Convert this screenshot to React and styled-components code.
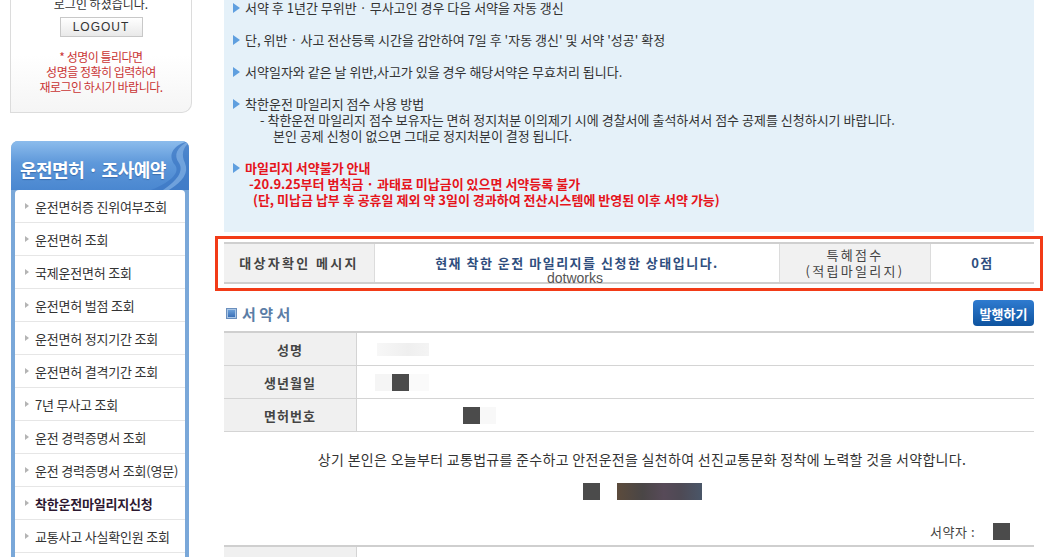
import React from 'react';
import styled, { createGlobalStyle } from 'styled-components';

const GlobalStyle = createGlobalStyle`
  html, body {
    margin: 0;
    padding: 0;
    background: #fff;
    overflow: hidden;
  }
  body {
    font-family: "Noto Sans CJK KR", "Noto Sans", sans-serif;
    font-size: 12px;
    color: #444;
  }
`;

const Page = styled.div`
  display: flex;
  align-items: flex-start;
  gap: 32px;
  width: 1045px;
  margin-top: -30px;
  padding-left: 10px;
  box-sizing: border-box;
`;

const Sidebar = styled.aside`
  width: 182px;
  flex: none;
`;

const LoginBox = styled.div`
  border: 1px solid #dcdcdc;
  border-top: 0;
  border-radius: 0 0 10px 0;
  background: linear-gradient(#fff 60%, #f5f5f5);
  text-align: center;
  padding: 10px 0 18px;
  line-height: 16px;
  color: #333;
`;

const LogoutButton = styled.button`
  display: block;
  margin: 5px auto 0;
  width: 83px;
  height: 20px;
  border: 1px solid #c8c8c8;
  background: linear-gradient(#fff, #e9e9e9);
  font-family: "Liberation Sans", Arial, sans-serif;
  font-size: 12px;
  letter-spacing: 1px;
  color: #333;
  padding: 0;
`;

const LoginWarn = styled.p`
  margin: 12px 0 0;
  color: #c93535;
  line-height: 15px;
  letter-spacing: -0.5px;
`;

const MenuPanel = styled.nav`
  margin-top: 28px;
  margin-left: 1px;
  width: 178px;
  background: linear-gradient(90deg, #7aa8d9, #6a9cd3 50%, #7aa8d9);
  border-radius: 7px 7px 0 0;
  padding: 0 4px;
  box-sizing: border-box;
`;

const MenuHeader = styled.div`
  position: relative;
  height: 49px;
  margin: 0 -4px;
  border-radius: 7px 7px 0 0;
  background: linear-gradient(#8cbcec, #5e98da 45%, #4a87d0);
  display: flex;
  align-items: center;
  padding: 6px 0 0 9px;
  box-sizing: border-box;
  overflow: hidden;
  svg {
    position: absolute;
    right: 0;
    top: 0;
  }
`;

const MenuTitle = styled.span`
  position: relative;
  z-index: 1;
  color: #fff;
  font-size: 18px;
  font-weight: bold;
  letter-spacing: -0.5px;
  text-shadow: 0 1px 1px rgba(20, 60, 120, 0.4);
`;

const MenuList = styled.ul`
  list-style: none;
  margin: 0;
  padding: 0;
  background: #fff;
  border-radius: 4px 4px 0 0;
`;

const MenuItem = styled.li`
  height: 32px;
  border-bottom: 1px solid #e6e6e6;
  display: flex;
  align-items: center;
  gap: 6px;
  padding-left: 10px;
  font-size: 13px;
  letter-spacing: -0.2px;
  color: ${(p) => (p.$active ? '#2c1830' : '#333')};
  font-weight: ${(p) => (p.$active ? 'bold' : 'normal')};
  &::before {
    content: '';
    border-left: 4px solid #b4b4b4;
    border-top: 3px solid transparent;
    border-bottom: 3px solid transparent;
  }
`;

const Main = styled.main`
  width: 810px;
  flex: none;
`;

const Notice = styled.div`
  background: #e5f1f9;
  padding: 30px 0 24px 9px;
`;

const NoticeItem = styled.div`
  display: flex;
  font-size: 13px;
  line-height: 16px;
  margin-bottom: 16px;
  color: ${(p) => (p.$red ? '#e5141c' : '#333')};
  font-weight: ${(p) => (p.$red ? 'bold' : 'normal')};
  &:last-child {
    margin-bottom: 0;
  }
  &::before {
    content: '';
    flex: none;
    margin: 3px 5px 0 0;
    height: 0;
    border-left: 7px solid #5f9fdf;
    border-top: 5px solid transparent;
    border-bottom: 5px solid transparent;
  }
`;

const SubLine = styled.div`
  padding-left: ${(p) => p.$indent}px;
`;

const Highlight = styled.div`
  position: relative;
  margin: 4px -9px 0;
  border: 3px solid #f23b17;
  padding: 3px 6px 4px;
`;

const Watermark = styled.span`
  position: absolute;
  left: 329px;
  top: 32px;
  font-family: "Liberation Sans", Arial, sans-serif;
  font-size: 14px;
  line-height: 15px;
  color: #555;
`;

const InfoTable = styled.div`
  display: grid;
  grid-template-columns: 150px 405px 151px 1fr;
  border-top: 2px solid #cfcfcf;
  border-bottom: 2px solid #cfcfcf;
`;

const InfoCell = styled.div`
  height: 38px;
  display: flex;
  align-items: center;
  justify-content: center;
  text-align: center;
  line-height: 16px;
  font-size: 13px;
  letter-spacing: ${(p) => (p.$label ? '2.3px' : '1.5px')};
  background: ${(p) => (p.$label ? '#f1f1f1' : '#fff')};
  color: ${(p) => (p.$label ? '#444' : '#2f4e7e')};
  font-weight: ${(p) => (p.$light ? 'normal' : 'bold')};
  & + & {
    border-left: 1px solid #dcdcdc;
  }
`;

const SectionHead = styled.div`
  display: flex;
  justify-content: space-between;
  align-items: center;
  height: 26px;
  margin-top: 9px;
`;

const SectionTitle = styled.h3`
  margin: 0;
  padding-left: 3px;
  display: flex;
  align-items: center;
  gap: 6px;
  font-size: 15px;
  font-weight: bold;
  color: #5b7da6;
  &::before {
    content: '';
    width: 7px;
    height: 7px;
    background: linear-gradient(#6b9fd8, #3a70b8);
    border: 1px solid #a9c6e6;
    outline: 1px solid #6b8fbd;
  }
`;

const IssueButton = styled.button`
  width: 61px;
  height: 26px;
  border: 0;
  border-radius: 4px;
  background: linear-gradient(#2f7bd0, #0e539f);
  color: #fff;
  font-family: inherit;
  font-size: 13px;
  font-weight: bold;
  padding: 0;
`;

const FormTable = styled.div`
  margin-top: ${(p) => p.$gap}px;
  border-top: 2px solid #cfcfcf;
`;

const FormRow = styled.div`
  display: grid;
  grid-template-columns: 133px 1fr;
  height: 32px;
  border-bottom: 1px solid #d4d4d4;
`;

const FormLabel = styled.div`
  background: #f0f0f0;
  border-right: 1px solid #d4d4d4;
  display: flex;
  align-items: center;
  justify-content: center;
  font-size: 13px;
  font-weight: bold;
  letter-spacing: 1px;
  color: #444;
`;

const FormValue = styled.div`
  display: flex;
  align-items: center;
  justify-content: ${(p) => (p.$center ? 'center' : 'flex-start')};
  padding-left: ${(p) => p.$pad || 0}px;
  font-size: 12px;
  color: #444;
`;

const Redact = styled.span`
  display: inline-block;
  width: ${(p) => p.$w}px;
  height: ${(p) => p.$h || 17}px;
  background: ${(p) => p.$bg};
  margin-left: ${(p) => p.$ml || 0}px;
`;

const Pledge = styled.p`
  margin: 18px 0 0;
  padding-left: 26px;
  text-align: center;
  font-size: 14px;
  line-height: 18px;
  letter-spacing: 0.3px;
  color: #333;
`;

const SignBlocks = styled.div`
  display: flex;
  justify-content: center;
  gap: 17px;
  margin-top: 15px;
  padding-left: 26px;
`;

const Signer = styled.div`
  display: flex;
  justify-content: flex-end;
  align-items: center;
  gap: 18px;
  margin-top: 22px;
  padding-right: 24px;
  font-size: 13px;
  letter-spacing: 0.5px;
  color: #444;
`;

const menu = [
  '운전면허증 진위여부조회',
  '운전면허 조회',
  '국제운전면허 조회',
  '운전면허 벌점 조회',
  '운전면허 정지기간 조회',
  '운전면허 결격기간 조회',
  '7년 무사고 조회',
  '운전 경력증명서 조회',
  '운전 경력증명서 조회(영문)',
  '착한운전마일리지신청',
  '교통사고 사실확인원 조회',
  '운전면허 취소처분 조회',
];

const Swoosh = () => (
  <svg width="60" height="49" viewBox="0 0 60 49">
    <path d="M60 0 C44 4 38 14 46 24 C52 32 40 42 22 49 L60 49 Z" fill="#3d78c4" opacity="0.75" />
    <path d="M60 0 C48 6 44 14 50 22 C55 30 48 40 34 49 L40 49 C54 40 60 32 56 22 C52 14 54 6 60 2 Z" fill="#9cc6ef" opacity="0.5" />
  </svg>
);

export default function App() {
  return (
    <>
      <GlobalStyle />
      <Page>
        <Sidebar>
          <LoginBox>
            <div>홍길동님</div>
            <div>로그인 하셨습니다.</div>
            <LogoutButton>LOGOUT</LogoutButton>
            <LoginWarn>
              * 성명이 틀리다면
              <br />
              성명을 정확히 입력하여
              <br />
              재로그인 하시기 바랍니다.
            </LoginWarn>
          </LoginBox>
          <MenuPanel>
            <MenuHeader>
              <Swoosh />
              <MenuTitle>운전면허 · 조사예약</MenuTitle>
            </MenuHeader>
            <MenuList>
              {menu.map((m) => (
                <MenuItem key={m} $active={m === '착한운전마일리지신청'}>
                  {m}
                </MenuItem>
              ))}
            </MenuList>
          </MenuPanel>
        </Sidebar>

        <Main>
          <Notice>
            <NoticeItem>서약 후 1년간 무위반 · 무사고인 경우 다음 서약을 자동 갱신</NoticeItem>
            <NoticeItem>단, 위반 · 사고 전산등록 시간을 감안하여 7일 후 '자동 갱신' 및 서약 '성공' 확정</NoticeItem>
            <NoticeItem>서약일자와 같은 날 위반,사고가 있을 경우 해당서약은 무효처리 됩니다.</NoticeItem>
            <NoticeItem>
              <div>
                <div>착한운전 마일리지 점수 사용 방법</div>
                <SubLine $indent={15}>
                  - 착한운전 마일리지 점수 보유자는 면허 정지처분 이의제기 시에 경찰서에 출석하셔서 점수 공제를 신청하시기 바랍니다.
                </SubLine>
                <SubLine $indent={28}>본인 공제 신청이 없으면 그대로 정지처분이 결정 됩니다.</SubLine>
              </div>
            </NoticeItem>
            <NoticeItem $red>
              <div>
                <div>마일리지 서약불가 안내</div>
                <SubLine $indent={4}>-20.9.25부터 범칙금 · 과태료 미납금이 있으면 서약등록 불가</SubLine>
                <SubLine $indent={8}>(단, 미납금 납부 후 공휴일 제외 약 3일이 경과하여 전산시스템에 반영된 이후 서약 가능)</SubLine>
              </div>
            </NoticeItem>
          </Notice>

          <Highlight>
            <InfoTable>
              <InfoCell $label>대상자확인 메시지</InfoCell>
              <InfoCell>현재 착한 운전 마일리지를 신청한 상태입니다.</InfoCell>
              <InfoCell $label $light>
                특혜점수
                <br />
                (적립마일리지)
              </InfoCell>
              <InfoCell>0점</InfoCell>
            </InfoTable>
            <Watermark>dotworks</Watermark>
          </Highlight>

          <SectionHead>
            <SectionTitle>서 약 서</SectionTitle>
            <IssueButton>발행하기</IssueButton>
          </SectionHead>

          <FormTable $gap={5}>
            <FormRow>
              <FormLabel>성명</FormLabel>
              <FormValue $pad={20}>
                <Redact $w={52} $h={13} $bg="linear-gradient(90deg, #f7f7f7, #efefef 60%, #f4f4f4)" />
              </FormValue>
            </FormRow>
            <FormRow>
              <FormLabel>생년월일</FormLabel>
              <FormValue $pad={18}>
                <Redact $w={17} $bg="#f5f5f5" />
                <Redact $w={17} $bg="#4b4b4b" />
                <Redact $w={20} $bg="#fafafa" />
              </FormValue>
            </FormRow>
            <FormRow>
              <FormLabel>면허번호</FormLabel>
              <FormValue $pad={106}>
                <Redact $w={17} $bg="#4b4b4b" />
                <Redact $w={16} $bg="#f8f8f8" />
              </FormValue>
            </FormRow>
          </FormTable>

          <Pledge>
            상기 본인은 오늘부터 교통법규를 준수하고 안전운전을 실천하여 선진교통문화 정착에 노력할 것을 서약합니다.
          </Pledge>
          <SignBlocks>
            <Redact $w={17} $bg="#4b4b4b" />
            <Redact $w={85} $bg="linear-gradient(90deg, #5c4b3c, #4a4646 30%, #574a58 55%, #4e4a55 75%, #4a5668)" />
          </SignBlocks>

          <Signer>
            <span>서약자 :</span>
            <Redact $w={17} $bg="#4b4b4b" />
          </Signer>

          <FormTable $gap={4}>
            <FormRow>
              <FormLabel>서약기간</FormLabel>
              <FormValue $center>2021 년 05 월 05 일 ~ 2022 년 05 월 04 일</FormValue>
            </FormRow>
          </FormTable>
        </Main>
      </Page>
    </>
  );
}
